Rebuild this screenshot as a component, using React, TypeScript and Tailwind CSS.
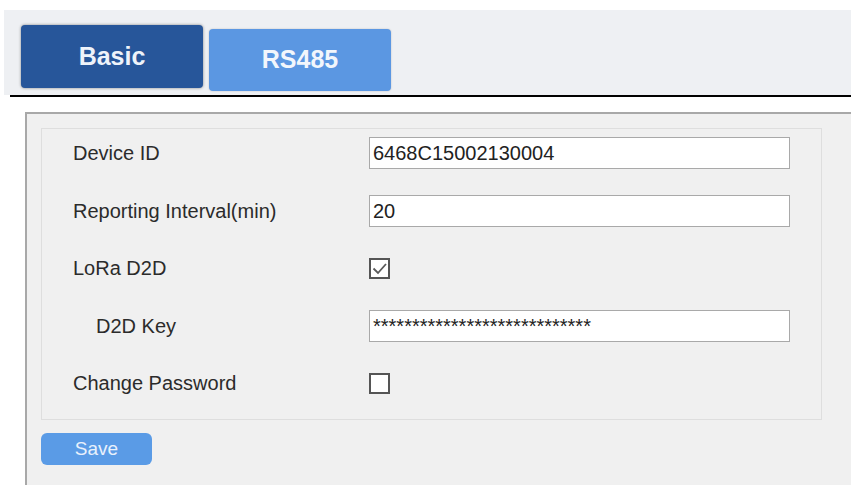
import React from 'react';

const labelFont = { fontFamily: '"Liberation Sans", Arial, sans-serif' };

const TextField: React.FC<{ value: string; small?: boolean }> = ({ value, small }) => (
  <div
    className={`w-[421px] h-[32px] border border-[#a9a9a9] bg-white pl-[3px] text-[20px] text-[#222] flex ${
      small ? 'items-start' : 'items-center'
    }`}
  >
    {value}
  </div>
);

const CheckBox: React.FC<{ checked?: boolean }> = ({ checked }) => (
  <div className="w-[21px] h-[21px] border-2 border-[#555] bg-white flex items-center justify-center">
    {checked && (
      <svg width="17" height="17" viewBox="0 0 17 17" fill="none">
        <path d="M2.5 8.5 L7 13 L15 4" stroke="#5a5a5a" strokeWidth="1.8" />
      </svg>
    )}
  </div>
);

const Row: React.FC<{ label: string; indent?: boolean; children: React.ReactNode }> = ({
  label,
  indent,
  children,
}) => (
  <div className="flex items-center h-[32px]">
    <div className={`w-[296px] text-[20px] text-[#2b2b2b] ${indent ? 'pl-[23px]' : ''}`}>{label}</div>
    {children}
  </div>
);

export default function App() {
  return (
    <div className="w-[854px] h-[489px] bg-white overflow-hidden" style={labelFont}>
      {/* tab bar */}
      <div className="mt-[10px] ml-[4px] w-[847px] h-[85px] bg-[#eef0f3] flex items-start gap-[6px] pt-[15px] pl-[17px]">
        <div className="w-[182px] h-[63px] rounded-[4px] bg-[#27569a] shadow-[0_0_3px_rgba(0,0,0,0.45)] flex items-center justify-center text-[25px] font-bold text-[#eef3fa]">
          Basic
        </div>
        <div className="mt-[4px] w-[182px] h-[62px] rounded-[4px] bg-[#5b97e2] shadow-[0_0_2px_rgba(0,0,0,0.2)] flex items-center justify-center text-[25px] font-bold text-[#f2f6fc]">
          RS485
        </div>
      </div>
      <div className="ml-[10px] w-[841px] h-[2px] bg-black" />

      {/* outer panel */}
      <div className="mt-[15px] ml-[25px] w-[826px] h-[373px] border-t-2 border-l-2 border-[#a8a8a8] bg-[#f0f0f0] pl-[14px] pt-[14px]">
        <div className="w-[781px] h-[292px] border border-[#dedede] pl-[31px] pt-[8px] flex flex-col gap-[25.5px]">
          <Row label="Device ID">
            <TextField value="6468C15002130004" />
          </Row>
          <Row label="Reporting Interval(min)">
            <TextField value="20" />
          </Row>
          <Row label="LoRa D2D">
            <CheckBox checked />
          </Row>
          <Row label="D2D Key" indent>
            <TextField value="****************************" small />
          </Row>
          <Row label="Change Password">
            <CheckBox />
          </Row>
        </div>
        <div className="mt-[13px] w-[111px] h-[32px] rounded-[6px] bg-[#5a9be6] flex items-center justify-center text-[19px] text-[#e9f1fc]">
          Save
        </div>
      </div>
    </div>
  );
}
